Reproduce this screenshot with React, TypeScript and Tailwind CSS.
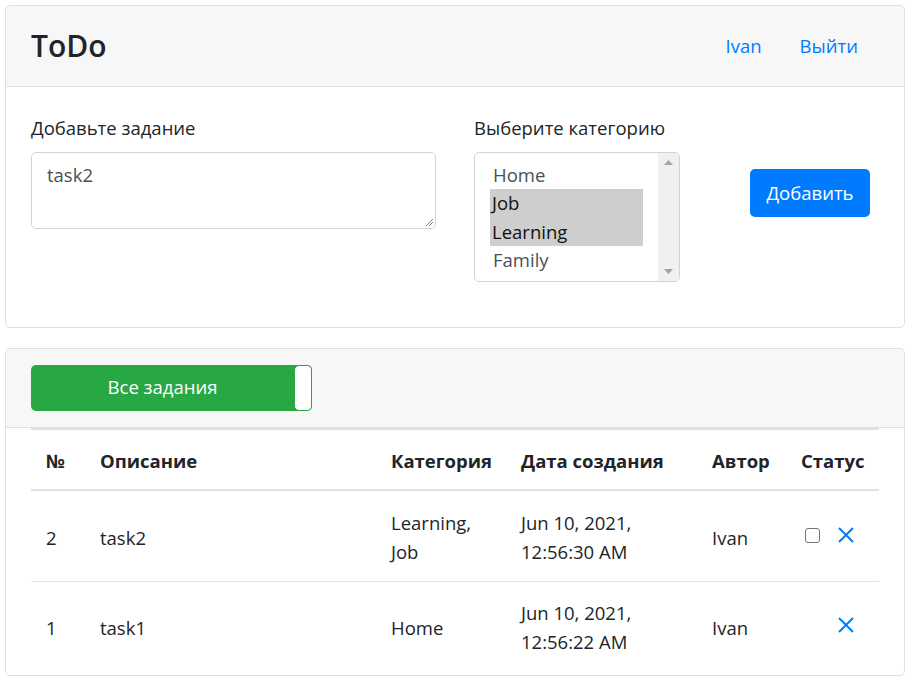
import React from "react";

const font = { fontFamily: '"Open Sans", "Noto Sans", sans-serif' };

const tasks = [
  { id: 2, text: "task2", cats: ["Learning,", "Job"], date: ["Jun 10, 2021,", "12:56:30 AM"], author: "Ivan", check: true },
  { id: 1, text: "task1", cats: ["Home"], date: ["Jun 10, 2021,", "12:56:22 AM"], author: "Ivan", check: false },
];

function XIcon() {
  return (
    <svg width="18" height="18" viewBox="0 0 18 18" className="text-[#007bff]">
      <path d="M2 2 L16 16 M16 2 L2 16" stroke="currentColor" strokeWidth="2" fill="none" />
    </svg>
  );
}

export default function App() {
  return (
    <div className="bg-white min-h-[682px] p-[5px] text-[#212529] text-[18.5px] leading-[28.8px]" style={font}>
      {/* Add task card */}
      <div className="border border-[#dfdfdf] rounded-[5px] w-[900px]">
        <div className="bg-[#f7f7f7] border-b border-[#dfdfdf] h-[81px] px-[25px] flex items-center justify-between rounded-t-[5px]">
          <h1 className="text-[30px] font-semibold leading-none">ToDo</h1>
          <div className="flex text-[#007bff] mr-[2px]">
            <a className="px-[19px]">Ivan</a>
            <a className="px-[19px]">Выйти</a>
          </div>
        </div>
        <div className="px-[25px] pt-[27px] pb-[45px] flex items-start">
          <div className="w-[405px]">
            <label className="block mb-[9px]">Добавьте задание</label>
            <div className="relative h-[77px] border border-[#ced4da] rounded-[5px] px-[15px] py-[8px] text-[#495057]">
              task2
              <svg width="8" height="8" viewBox="0 0 8 8" className="absolute right-[2px] bottom-[2px]">
                <path d="M1 8 L8 1 M4 8 L8 4" stroke="#888" strokeWidth="1" />
              </svg>
            </div>
          </div>
          <div className="ml-[38px] w-[206px]">
            <label className="block mb-[9px] whitespace-nowrap">Выберите категорию</label>
            <div className="h-[130px] border border-[#ced4da] rounded-[5px] flex overflow-hidden">
              <div className="flex-1 pt-[8px] pl-[15px] pr-[15px]">
                <div className="pl-[3px] text-[#495057] h-[28.5px]">Home</div>
                <div className="bg-[#cecece] text-[#111] h-[28.5px] pl-[2px]">Job</div>
                <div className="bg-[#cecece] text-[#111] h-[28.5px] pl-[2px]">Learning</div>
                <div className="pl-[3px] text-[#495057] h-[28.5px]">Family</div>
              </div>
              <div className="w-[21px] bg-[#f0f0f0] flex flex-col items-center justify-between py-[7px]">
                <svg width="9" height="5" viewBox="0 0 9 5"><path d="M0 5 L4.5 0 L9 5 Z" fill="#a3a3a3" /></svg>
                <svg width="9" height="5" viewBox="0 0 9 5"><path d="M0 0 L4.5 5 L9 0 Z" fill="#a3a3a3" /></svg>
              </div>
            </div>
          </div>
          <button className="ml-[70px] mt-[55px] h-[48px] w-[120px] bg-[#007bff] text-white rounded-[5px]">
            Добавить
          </button>
        </div>
      </div>

      {/* Task list card */}
      <div className="border border-[#dfdfdf] rounded-[5px] w-[900px] mt-[20px]">
        <div className="bg-[#f7f7f7] border-b border-[#dfdfdf] px-[25px] py-[16px] rounded-t-[5px]">
          <div className="w-[281px] h-[46px] bg-[#28a745] rounded-[5px] flex">
            <div className="flex-1 flex items-center justify-center text-white">Все задания</div>
            <div className="w-[18px] h-full bg-white border border-[#28a745] rounded-[5px]" />
          </div>
        </div>
        <div className="px-[25px] pb-[5px]">
          <table className="w-[848px] border-collapse table-fixed">
            <colgroup>
              <col className="w-[55px]" />
              <col className="w-[291px]" />
              <col className="w-[130px]" />
              <col className="w-[191px]" />
              <col className="w-[89px]" />
              <col className="w-[92px]" />
            </colgroup>
            <thead>
              <tr className="border-t-2 border-b-2 border-[#dee2e6] h-[61px] text-left">
                <th className="px-[15px] pt-[4px] font-bold">№</th>
                <th className="px-[14px] pt-[4px] font-bold">Описание</th>
                <th className="px-[14px] pt-[4px] font-bold">Категория</th>
                <th className="px-[14px] pt-[4px] font-bold">Дата создания</th>
                <th className="px-[14px] pt-[4px] font-bold">Автор</th>
                <th className="px-[14px] pt-[4px] font-bold">Статус</th>
              </tr>
            </thead>
            <tbody>
              {tasks.map((t, i) => (
                <tr key={t.id} className={i === 0 ? "border-b border-[#dee2e6] h-[92px]" : "h-[88px]"}>
                  <td className="px-[15px] pt-[4px]">{t.id}</td>
                  <td className="px-[14px] pt-[4px]">{t.text}</td>
                  <td className="px-[14px] pt-[4px]">
                    {t.cats.map((c) => (
                      <div key={c}>{c}</div>
                    ))}
                  </td>
                  <td className="px-[14px] pt-[4px]">
                    {t.date.map((d) => (
                      <div key={d}>{d}</div>
                    ))}
                  </td>
                  <td className="px-[14px] pt-[4px]">{t.author}</td>
                  <td className="px-[14px] pt-[4px]">
                    <div className="flex items-center h-[20px] -mt-[6px] ml-[4px]">
                      {t.check ? (
                        <span className="w-[15px] h-[15px] border border-[#767676] rounded-[3px] bg-white" />
                      ) : (
                        <span className="w-[15px] h-[15px]" />
                      )}
                      <span className="ml-[17px]"><XIcon /></span>
                    </div>
                  </td>
                </tr>
              ))}
            </tbody>
          </table>
        </div>
      </div>
    </div>
  );
}
